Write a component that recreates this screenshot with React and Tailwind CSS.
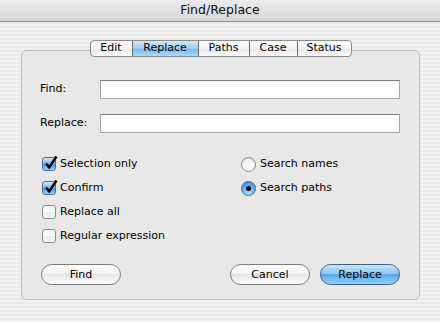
import { useState } from 'react';

const TABS = ['Edit', 'Replace', 'Paths', 'Case', 'Status'];
const TAB_W = { Edit: 'w-[41px]', Replace: 'w-[66px]', Paths: 'w-[51px]', Case: 'w-[48px]', Status: 'w-[54px]' };

function Check({ checked, label }) {
  return (
    <div className="flex items-center h-[24px]">
      <span
        className={
          'relative w-[14px] h-[14px] rounded-[3px] border shrink-0 ' +
          (checked
            ? 'border-[#4a6f9c] bg-[linear-gradient(#d3e8fb,#7ab6ee_50%,#4d97e3_51%,#9fd0fb)]'
            : 'border-[#8a8a8a] bg-[linear-gradient(#f4f4f4,#ffffff_50%,#e9e9e9_51%,#fbfbfb)]')
        }
      >
        {checked && (
          <svg className="absolute left-[1px] top-[-3px]" width="14" height="15" viewBox="0 0 14 15">
            <path d="M2 8.5 L5.2 12.5 L12.5 1.5" fill="none" stroke="#000" strokeWidth="2.4" strokeLinejoin="miter" />
          </svg>
        )}
      </span>
      <span className="ml-[4px]">{label}</span>
    </div>
  );
}

function Radio({ checked, label }) {
  return (
    <div className="flex items-center h-[24px]">
      <span
        className={
          'w-[15px] h-[15px] rounded-full border shrink-0 flex items-center justify-center ' +
          (checked
            ? 'border-[#4a6f9c] bg-[radial-gradient(circle_at_50%_80%,#b6e0ff,#5aa2e8_60%,#3d7fc9)]'
            : 'border-[#8a8a8a] bg-[radial-gradient(circle_at_50%_85%,#ffffff,#f2f2f2_60%,#d8d8d8)]')
        }
      >
        {checked && <span className="w-[5px] h-[5px] rounded-full bg-black" />}
      </span>
      <span className="ml-[4px]">{label}</span>
    </div>
  );
}

function PillButton({ children, primary, className = '' }) {
  return (
    <button
      className={
        'h-[21px] w-[80px] rounded-full border text-[11px] text-black leading-none ' +
        (primary
          ? 'border-[#3b5f8c] bg-[linear-gradient(#cde7fc,#8cc6f5_45%,#5fa9ea_50%,#8ed0fa_100%)]'
          : 'border-[#7a7a7a] bg-[linear-gradient(#ffffff,#f3f3f3_45%,#e6e6e6_50%,#fbfbfb_100%)]') +
        ' ' + className
      }
    >
      {children}
    </button>
  );
}

export default function App() {
  const [tab, setTab] = useState('Replace');

  return (
    <div className="w-[440px] h-[322px] overflow-hidden text-[11px] text-black font-['DejaVu_Sans',sans-serif] bg-[repeating-linear-gradient(180deg,#f1f1f1_0px,#f1f1f1_2px,#e9e9e9_2px,#e9e9e9_4px)]">
      {/* Title bar */}
      <div className="h-[22px] border-b border-[#8d8d8d] bg-[linear-gradient(#ececec,#d6d6d6)] flex items-center justify-center text-[12.5px] text-[#111]">
        Find/Replace
      </div>

      {/* Tabs */}
      <div className="relative z-10 mt-[18px] -mb-[7px] flex justify-center pl-[1px]">
        <div className="flex h-[17px] rounded-[4px] border border-[#8b8b8b] overflow-hidden bg-[linear-gradient(#ffffff,#f4f4f4_50%,#e8e8e8_51%,#fafafa)]">
          {TABS.map((t, i) => (
            <button
              key={t}
              onClick={() => setTab(t)}
              className={
                TAB_W[t] + ' h-full flex items-center justify-center text-[11px] ' +
                (i > 0 ? 'border-l border-[#6b6b6b] ' : '') +
                (tab === t ? 'bg-[linear-gradient(#d0e8fb,#9ccdf5_50%,#77b7ee_51%,#a9dafc)]' : '')
              }
            >
              {t}
            </button>
          ))}
        </div>
      </div>

      {/* Group box */}
      <div className="ml-[21px] w-[399px] h-[250px] rounded-[6px] border border-[#bdbdbd] bg-[#e8e8e8] pt-[29px] pl-[18px] pr-[19px]">
        <div className="flex items-center h-[19px]">
          <span className="w-[60px]">Find:</span>
          <input className="flex-1 h-[19px] bg-white border border-[#a8a8a8] border-t-[#7c7c7c] outline-none" />
        </div>
        <div className="flex items-center h-[19px] mt-[15px]">
          <span className="w-[60px]">Replace:</span>
          <input className="flex-1 h-[19px] bg-white border border-[#a8a8a8] border-t-[#7c7c7c] outline-none" />
        </div>

        <div className="flex mt-[19px]">
          <div className="w-[200px] pl-[2px]">
            <Check checked label="Selection only" />
            <Check checked label="Confirm" />
            <Check label="Replace all" />
            <Check label="Regular expression" />
          </div>
          <div className="pl-[1px]">
            <Radio label="Search names" />
            <Radio checked label="Search paths" />
          </div>
        </div>

        <div className="flex mt-[16px] pl-[1px]">
          <PillButton>Find</PillButton>
          <PillButton className="ml-auto">Cancel</PillButton>
          <PillButton primary className="ml-[10px]">Replace</PillButton>
        </div>
      </div>
    </div>
  );
}
